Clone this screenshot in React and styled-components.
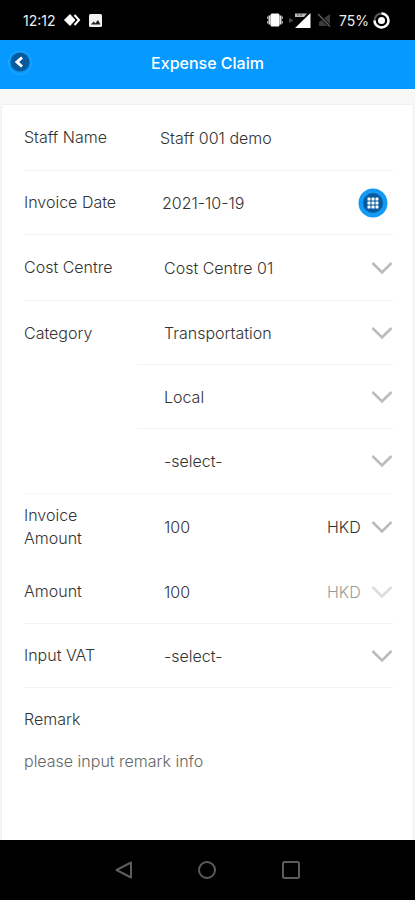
import React from "react";
import styled, { createGlobalStyle } from "styled-components";

const App = () => {
  return (
    <>
      <GlobalStyle />
      <Screen>
        <StatusBar>
          <StatusGroup>
            <span>12:12</span>
            <DiamondIcon />
            <PhotoIcon />
          </StatusGroup>
          <StatusGroup $tight>
            <VibrateIcon />
            <SignalIcon />
            <NoSimIcon />
            <Battery>
              75%
              <BatteryIcon />
            </Battery>
          </StatusGroup>
        </StatusBar>

        <Header>
          <BackButton type="button" aria-label="Back">
            <BackIcon />
          </BackButton>
          <Title>Expense Claim</Title>
        </Header>

        <Content>
          <Card>
            <Row $line $tall>
              <Label htmlFor="staff" $width="136px">Staff Name</Label>
              <Input id="staff" defaultValue="Staff 001 demo" readOnly />
            </Row>
            <Row $line>
              <Label htmlFor="date" $width="138px">Invoice Date</Label>
              <Input id="date" defaultValue="2021-10-19" />
              <DateButton type="button" aria-label="Pick a date">
                <CalendarIcon />
              </DateButton>
            </Row>
            <Row $line $tall>
              <Label htmlFor="centre">Cost Centre</Label>
              <SelectField id="centre" options={["Cost Centre 01"]} />
            </Row>
            <Group>
              <GroupLabel>
                <Label htmlFor="category" $width="auto">Category</Label>
              </GroupLabel>
              <GroupFields>
                <Row $line $indent>
                  <SelectField id="category" options={["Transportation"]} />
                </Row>
                <Row $line $indent>
                  <SelectField label="Category type" options={["Local"]} />
                </Row>
                <Row $indent>
                  <SelectField label="Category detail" options={["-select-"]} />
                </Row>
              </GroupFields>
            </Group>
            <Row $tall>
              <Label htmlFor="invoiceAmount">
                Invoice
                <br />
                Amount
              </Label>
              <Input id="invoiceAmount" defaultValue="100" />
              <SelectField label="Invoice currency" options={["HKD"]} narrow />
            </Row>
            <Row $line>
              <Label htmlFor="amount">Amount</Label>
              <Input id="amount" defaultValue="100" />
              <SelectField label="Currency" options={["HKD"]} narrow disabled />
            </Row>
            <Row $line>
              <Label htmlFor="vat">Input VAT</Label>
              <SelectField id="vat" options={["-select-"]} />
            </Row>
            <RemarkBlock>
              <Label htmlFor="remark">Remark</Label>
              <Remark id="remark" placeholder="please input remark info" />
            </RemarkBlock>
          </Card>
        </Content>

        <NavBar>
          <NavButton type="button" aria-label="Back">
            <svg width="20" height="20" viewBox="0 0 20 20">
              <path d="M17 2.5v15L2.5 10z" />
            </svg>
          </NavButton>
          <NavButton type="button" aria-label="Home">
            <svg width="20" height="20" viewBox="0 0 20 20">
              <circle cx="10" cy="10" r="8" />
            </svg>
          </NavButton>
          <NavButton type="button" aria-label="Recent apps">
            <svg width="20" height="20" viewBox="0 0 20 20">
              <rect x="2" y="2" width="16" height="16" rx="1.5" />
            </svg>
          </NavButton>
        </NavBar>
      </Screen>
    </>
  );
};

export default App;

const SelectField = ({ id, label, options, narrow, disabled }) => (
  <SelectWrap $narrow={narrow} $disabled={disabled}>
    <Select id={id} aria-label={label} disabled={disabled}>
      {options.map((option) => (
        <option key={option}>{option}</option>
      ))}
    </Select>
    <Chevron width="22" height="14" viewBox="0 0 22 14">
      <path d="M1.5 2 11 11.5 20.5 2" />
    </Chevron>
  </SelectWrap>
);

const DiamondIcon = () => (
  <svg width="17" height="14" viewBox="0 0 17 14" fill="#fff">
    <path d="M6 1.5 11 7l-5 5.5L.5 7z" stroke="#fff" strokeLinejoin="round" />
    <path d="M10.5 2 15 7l-4.5 5" fill="none" stroke="#fff" strokeWidth="2" />
  </svg>
);

const PhotoIcon = () => (
  <svg width="13" height="13" viewBox="0 0 13 13">
    <rect width="13" height="13" rx="1.5" fill="#f2f2f2" />
    <path d="M2 10.5 4.5 7.5l1.8 1.7L9 6l2.5 4.5z" fill="#222" />
  </svg>
);

const VibrateIcon = () => (
  <svg width="16" height="14" viewBox="0 0 16 14">
    <rect x="3.500" y="0.5" width="9" height="13" rx="1.5" fill="#fff" />
    <path d="M2.5 2.5v9M13.5 2.5v9" stroke="#ddd" strokeWidth="2" />
    <path d="M.7 3.5v2.500M.7 8v2.500M15.3 3.500v2.500M15.3 8v2.500" stroke="#ccc" />
  </svg>
);

const SignalIcon = () => (
  <svg width="22" height="15" viewBox="0 0 22 15">
    <path d="M1 5.5v4M3 6.5v2" stroke="#777" strokeWidth="1.2" />
    <path d="M21.5 0v15H6z" fill="#fff" />
    <path d="M6 .5h12L15 4H6z" fill="#bbb" />
    <path d="M8 2h6" stroke="#555" strokeDasharray="2 1" />
  </svg>
);

const NoSimIcon = () => (
  <svg width="14" height="14" viewBox="0 0 14 14">
    <path d="M13 1v12H2V9z" fill="#3c3c3c" />
    <path d="M1 1l12 12.5" stroke="#000" strokeWidth="3" />
    <path d="M1 1l12 12.5" stroke="#666" strokeWidth="1.2" />
  </svg>
);

const BatteryIcon = () => (
  <svg width="17" height="17" viewBox="0 0 17 17" fill="none" stroke="#fff">
    <circle cx="8.5" cy="8.5" r="7" stroke="#555" strokeWidth="2" />
    <path d="M8.5 1.5a7 7 0 1 1-7 7" strokeWidth="2.5" />
    <circle cx="8.5" cy="8.5" r="3.5" fill="#fff" stroke="none" />
  </svg>
);

const BackIcon = () => (
  <svg width="24" height="26" viewBox="0 0 24 26" fill="none">
    <circle cx="12" cy="13" r="11.5" stroke="#2aa8ff" />
    <circle cx="12" cy="12" r="9.5" fill="#075a9e" />
    <path d="M14 7.500l-5 4.5 5 4.5" stroke="#fff" strokeWidth="3" />
  </svg>
);

const CalendarIcon = () => (
  <svg width="30" height="30" viewBox="0 0 30 30">
    <circle cx="15" cy="15" r="14.5" fill="#1499f5" />
    <circle cx="15" cy="15" r="10" fill="#075a9e" />
    <g fill="#fff">
      {[9.5, 13.5, 17.5].map((y) =>
        [9.5, 13.5, 17.5].map((x) => (
          <rect key={`${x}-${y}`} x={x} y={y} width="3" height="3" rx=".5" />
        ))
      )}
    </g>
  </svg>
);

const GlobalStyle = createGlobalStyle`
  * {
    box-sizing: border-box;
  }

  body {
    margin: 0;
    background: #f8f8f8;
    color: #333;
    font-family: Inter, "Liberation Sans", sans-serif;
    font-size: 16px;
    font-weight: 300;
  }

  button, input, select, textarea {
    font: inherit;
    color: inherit;
    margin: 0;
    padding: 0;
    border: 0;
    background: none;
  }
`;

const Screen = styled.div`
  min-height: 100vh;
  display: flex;
  flex-direction: column;
`;

const StatusBar = styled.div`
  height: 40px;
  padding: 0 25px 0 23px;
  display: flex;
  align-items: center;
  justify-content: space-between;
  background: #000;
  color: #eee;
  font-size: 14px;
  font-weight: 400;
`;

const StatusGroup = styled.div`
  display: flex;
  align-items: center;
  gap: ${(props) => (props.$tight ? "6px" : "8px")};
`;

const Battery = styled.span`
  display: flex;
  align-items: center;
  gap: 4px;
  padding-left: 2px;
`;

const Header = styled.header`
  height: 49px;
  padding-bottom: 4px;
  display: grid;
  grid-template-columns: 40px 1fr 40px;
  align-items: center;
  background: #0699ff;
  color: #fff;
`;

const BackButton = styled.button`
  display: flex;
  padding-left: 8px;
`;

const Title = styled.h1`
  margin: 0;
  text-align: center;
  font-size: 16px;
  font-weight: 500;
`;

const Content = styled.main`
  flex: 1;
  display: flex;
  padding: 16px 2px 0;
`;

const Card = styled.form`
  flex: 1;
  min-width: 0;
  padding: 0 20px 0 22px;
  background: #fff;
  box-shadow: 0 0 2px #ddd;
`;

const Row = styled.div`
  height: ${(props) => (props.$tall ? "66px" : "64px")};
  display: flex;
  align-items: center;
  padding-left: ${(props) => (props.$indent ? "27px" : "0")};
  border-bottom: ${(props) => (props.$line ? "1px solid #f3f3f3" : "0")};
`;

const Label = styled.label`
  flex: none;
  width: ${(props) => props.$width || "140px"};
  line-height: 23px;
`;

const Input = styled.input`
  flex: 1;
  min-width: 0;
  outline: none;
`;

const DateButton = styled.button`
  display: flex;
  margin-right: 5px;
`;

const Group = styled.div`
  display: flex;
  border-bottom: 1px solid #f6f6f6;
`;

const GroupLabel = styled.div`
  width: 113px;
  height: 64px;
  display: flex;
  align-items: center;
`;

const GroupFields = styled.div`
  flex: 1;
  min-width: 0;
`;

const SelectWrap = styled.div`
  position: relative;
  flex: ${(props) => (props.$narrow ? "0 0 66px" : "1")};
  min-width: 0;
  display: flex;
  align-items: center;
  opacity: ${(props) => (props.$disabled ? "0.5" : "1")};
`;

const Select = styled.select`
  width: 100%;
  padding-right: 28px;
  appearance: none;
  outline: none;

  &:disabled {
    opacity: 1;
  }
`;

const Chevron = styled.svg`
  position: absolute;
  right: 0;
  pointer-events: none;
  fill: none;
  stroke: #bbb;
  stroke-width: 2.5;
`;

const RemarkBlock = styled.div`
  display: flex;
  flex-direction: column;
  gap: 19px;
  padding-top: 20px;
`;

const Remark = styled.textarea`
  height: 60px;
  line-height: 23px;
  resize: none;
  outline: none;

  &::placeholder {
    color: #666;
  }
`;

const NavBar = styled.nav`
  height: 60px;
  padding: 0 82px;
  display: flex;
  align-items: center;
  justify-content: space-around;
  background: #000;
`;

const NavButton = styled.button`
  display: flex;

  svg {
    fill: none;
    stroke: #5c5c5c;
    stroke-width: 2;
    stroke-linejoin: round;
  }
`;
